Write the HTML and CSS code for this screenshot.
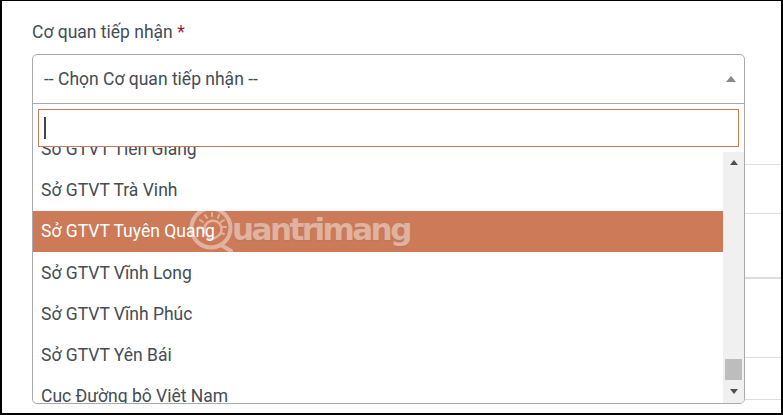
FILE: index.html
```html
<!DOCTYPE html>
<html lang="en">
<head>
    <meta charset="UTF-8">
    <meta name="viewport" content="width=device-width, initial-scale=1.0">
    <title>Cơ quan tiếp nhận</title>
    <link rel="stylesheet" href="styles.css">
</head>
<body>
    <div class="page">
        <div class="form-col">
            <label class="field-label">Cơ quan tiếp nhận <span class="required">*</span></label>
            <div class="select-box">
                <div class="select-head">
                    <span>-- Chọn Cơ quan tiếp nhận --</span>
                    <span class="head-arrow"></span>
                </div>
                <div class="search-wrap">
                    <div class="search-input"><span class="caret"></span></div>
                </div>
                <div class="list-wrap">
                    <div class="options">
                        <div class="option clipped">Sở GTVT Tiền Giang</div>
                        <div class="option">Sở GTVT Trà Vinh</div>
                        <div class="option active">Sở GTVT Tuyên Quang</div>
                        <div class="option">Sở GTVT Vĩnh Long</div>
                        <div class="option">Sở GTVT Vĩnh Phúc</div>
                        <div class="option">Sở GTVT Yên Bái</div>
                        <div class="option">Cục Đường bộ Việt Nam</div>
                    </div>
                    <div class="scrollbar">
                        <span class="arrow-up"></span>
                        <div class="track"><div class="thumb"></div></div>
                        <span class="arrow-down"></span>
                    </div>
                </div>
            </div>
        </div>
        <div class="side-col">
            <div class="side-row row-1"></div>
            <div class="side-row row-2"></div>
            <div class="side-row row-3"></div>
            <div class="side-row row-4"></div>
            <div class="side-row row-5"></div>
        </div>

        <!-- watermark -->
        <div class="watermark">
            <svg class="wm-icon" width="50" height="52" viewBox="0 0 50 52">
                <circle cx="23" cy="24" r="19.5" fill="none" stroke="#fff" stroke-width="4"/>
                <path d="M33 41 L43 47" stroke="#fff" stroke-width="4" stroke-linecap="round"/>
                <path d="M20 35 L20 32 A8.5 8.5 0 1 1 30 32 L25 35 Z" fill="none" stroke="#fff" stroke-width="2.5" stroke-linejoin="round"/>
                <path d="M11 23l4 1M12 16l3 2M17 11l2 3M24 9v3M31 11l-1 3M36 16l-3 2M38 23h-3M36 30l-3-1" stroke="#fff" stroke-width="2" stroke-linecap="round"/>
            </svg>
            <span class="wm-text">uantrimang</span>
        </div>
    </div>
</body>
</html>
```

FILE: styles.css
```css
* {
    box-sizing: border-box;
}
html, body {
    margin: 0;
    height: 100%;
}
body {
    font-family: Roboto, Arial, sans-serif;
    background: #fff;
    overflow: hidden;
}
.page {
    position: relative;
    display: flex;
    width: 783px;
    height: 415px;
    padding-left: 30px;
    border-style: solid;
    border-color: #000;
    border-width: 1px 2px 2px 2px;
    overflow: hidden;
}
.form-col {
    width: 713px;
    flex: none;
    padding-top: 21px;
}
.field-label {
    display: block;
    height: 32px;
    font-size: 17.5px;
    line-height: 20px;
    color: #444c55;
}
.required {
    color: #a5192a;
}
.select-box {
    height: 350px;
    display: flex;
    flex-direction: column;
    border: 1px solid #aaa;
    border-radius: 5px;
    overflow: hidden;
}
.select-head {
    display: flex;
    align-items: center;
    justify-content: space-between;
    flex: none;
    height: 49px;
    padding: 0 8px 0 11px;
    font-size: 17.5px;
    color: #444c55;
    border-bottom: 1px solid #aaa;
}
.head-arrow {
    width: 0;
    height: 0;
    margin-top: -1px;
    border-left: 5px solid transparent;
    border-right: 5px solid transparent;
    border-bottom: 6px solid #888;
}
.search-wrap {
    flex: none;
    height: 43px;
    padding: 5px 5px 0;
    position: relative;
    z-index: 1;
}
.search-input {
    height: 38px;
    padding: 7px 5px;
    background: #fff;
    border: 1px solid #cc7a58;
}
.caret {
    display: block;
    width: 2px;
    height: 22px;
    background: #444;
}
.list-wrap {
    flex: 1;
    display: flex;
    min-height: 0;
}
.options {
    flex: 1;
    min-width: 0;
    margin-top: -19px;
}
.option {
    height: 41.3px;
    padding: 0 8px;
    display: flex;
    align-items: center;
    font-size: 17.5px;
    color: #444c55;
}
.option.active {
    background: #cc7a58;
    color: #fff;
}
.scrollbar {
    flex: none;
    width: 21px;
    margin-top: 5px;
    display: flex;
    flex-direction: column;
    align-items: center;
    background: #f0f0f0;
    position: relative;
    z-index: 2;
}
.arrow-up {
    width: 0;
    height: 0;
    margin-top: 8px;
    border-left: 4.5px solid transparent;
    border-right: 4.5px solid transparent;
    border-bottom: 5px solid #505050;
}
.track {
    flex: 1;
    width: 100%;
    display: flex;
    flex-direction: column;
    justify-content: flex-end;
    padding: 0 2px 9px;
}
.thumb {
    height: 21px;
    background: #bdbdbd;
}
.arrow-down {
    width: 0;
    height: 0;
    margin-bottom: 9px;
    border-left: 4.5px solid transparent;
    border-right: 4.5px solid transparent;
    border-top: 5px solid #505050;
}
.side-col {
    flex: 1;
}
.side-row {
    border-bottom: 1px solid #ddd;
}
.row-1 { height: 164px; }
.row-2 { height: 49px; }
.row-3 { height: 65px; border-bottom-width: 2px; }
.row-4 { height: 79px; }
.row-5 { height: 42px; }
.watermark {
    position: absolute;
    left: 186px;
    top: 203px;
    display: flex;
    align-items: center;
    opacity: 0.42;
    pointer-events: none;
}
.wm-icon {
    flex: none;
}
.wm-text {
    margin-left: -6px;
    margin-top: -2px;
    font-family: "DejaVu Sans", sans-serif;
    font-weight: 700;
    font-size: 31px;
    letter-spacing: -2.55px;
    color: #fff;
    text-shadow: 0 1px 1px rgba(120, 120, 120, 0.5);
}
```
